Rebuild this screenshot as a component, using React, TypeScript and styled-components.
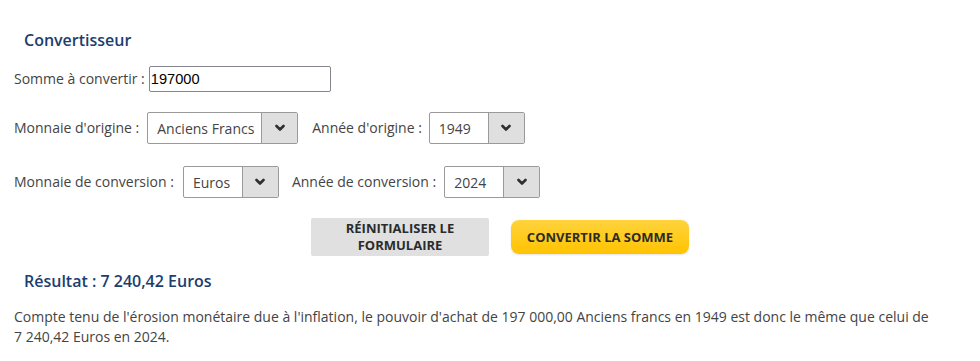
import { createGlobalStyle } from 'styled-components';
import styled from 'styled-components';

const GlobalStyle = createGlobalStyle`
  body {
    margin: 0;
    background: #ffffff;
    font-family: "Open Sans", "Noto Sans", sans-serif;
  }
`;

export const Page = styled.div`
  width: 950px;
  padding: 0 14px;
  display: flex;
  flex-direction: column;
  color: #444;
  font-size: 14px;
`;

export const Heading = styled.h2<{ $top: number }>`
  margin: ${p => p.$top}px 0 0 10px;
  font-size: 16px;
  line-height: 22px;
  font-weight: 600;
  color: #1c3e6e;
`;

export const Row = styled.div<{ $top: number }>`
  display: flex;
  align-items: center;
  margin-top: ${p => p.$top}px;
`;

export const Label = styled.label<{ $lead?: number; $gap?: number }>`
  margin-left: ${p => p.$lead ?? 0}px;
  margin-right: ${p => p.$gap ?? 8}px;
  white-space: nowrap;
  line-height: 20px;
`;

export const AmountInput = styled.input`
  box-sizing: border-box;
  width: 182px;
  height: 26px;
  margin-left: -4px;
  padding: 1px 1px;
  border: 1px solid #85858f;
  border-radius: 2px;
  font-family: "Liberation Sans", Arial, sans-serif;
  font-size: 14.6px;
  color: #000;
  outline: none;
`;

export const SelectBox = styled.div`
  display: flex;
  height: 32px;
  box-sizing: border-box;
  border: 1px solid #9a9a9a;
  border-radius: 2px;
  background: #fff;
`;

export const SelectValue = styled.div<{ $w: number }>`
  width: ${p => p.$w}px;
  box-sizing: border-box;
  padding-left: 9px;
  display: flex;
  align-items: center;
  color: #444;
  white-space: nowrap;
`;

export const SelectArrow = styled.div`
  width: 35px;
  display: flex;
  align-items: center;
  justify-content: center;
  background: #dfdfdf;
  border-left: 1px solid #9a9a9a;
  color: #2f2f2f;
`;

export const Buttons = styled.div`
  display: flex;
  align-items: center;
  gap: 22px;
  margin-top: 20px;
  padding-left: 297px;
`;

export const ResetButton = styled.button`
  width: 178px;
  height: 38px;
  border: 0;
  border-radius: 2px;
  background: #e0e0e0;
  color: #2b2b2b;
  font-family: "Open Sans", sans-serif;
  font-size: 13px;
  font-weight: 700;
  line-height: 17px;
  text-transform: uppercase;
  padding: 0 26px;
`;

export const ConvertButton = styled.button`
  width: 178px;
  height: 34px;
  border: 0;
  border-radius: 8px;
  background: linear-gradient(#ffd33d, #ffc300);
  box-shadow: 0 1px 2px rgba(0, 0, 0, 0.12);
  color: #2b2b2b;
  font-family: "Open Sans", sans-serif;
  font-size: 13px;
  font-weight: 700;
  text-transform: uppercase;
  padding: 0;
`;

export const Paragraph = styled.p`
  margin: 15px 0 0;
  line-height: 20px;
  color: #444;
`;

const Chevron = () => (
  <svg width="10" height="8" viewBox="0 0 10 8">
    <polyline points="1.5,2 5,5.5 8.5,2" fill="none" stroke="currentColor" strokeWidth="2.6" strokeLinecap="round" strokeLinejoin="round" />
  </svg>
);

interface SelectProps {
  value: string;
  width: number;
}

const Select = ({ value, width }: SelectProps) => (
  <SelectBox>
    <SelectValue $w={width}>{value}</SelectValue>
    <SelectArrow>
      <Chevron />
    </SelectArrow>
  </SelectBox>
);

const App = () => {
  return (
    <>
      <GlobalStyle />
      <Page>
        <Heading $top={29}>Convertisseur</Heading>
        <Row $top={15}>
          <Label>Somme à convertir :</Label>
          <AmountInput defaultValue="197000" />
        </Row>
        <Row $top={20}>
          <Label>Monnaie d'origine :</Label>
          <Select value="Anciens Francs" width={113} />
          <Label $lead={14} $gap={7}>Année d'origine :</Label>
          <Select value="1949" width={58} />
        </Row>
        <Row $top={22}>
          <Label $gap={9}>Monnaie de conversion :</Label>
          <Select value="Euros" width={58} />
          <Label $lead={13}>Année de conversion :</Label>
          <Select value="2024" width={58} />
        </Row>
        <Buttons>
          <ResetButton>Réinitialiser le formulaire</ResetButton>
          <ConvertButton>Convertir la somme</ConvertButton>
        </Buttons>
        <Heading $top={14}>Résultat : 7{'\u00a0'}240,42 Euros</Heading>
        <Paragraph>
          Compte tenu de l'érosion monétaire due à l'inflation, le pouvoir d'achat de 197{'\u00a0'}000,00 Anciens
          francs en 1949 est donc le même que celui de 7{'\u00a0'}240,42 Euros en 2024.
        </Paragraph>
      </Page>
    </>
  );
};

export default App;
